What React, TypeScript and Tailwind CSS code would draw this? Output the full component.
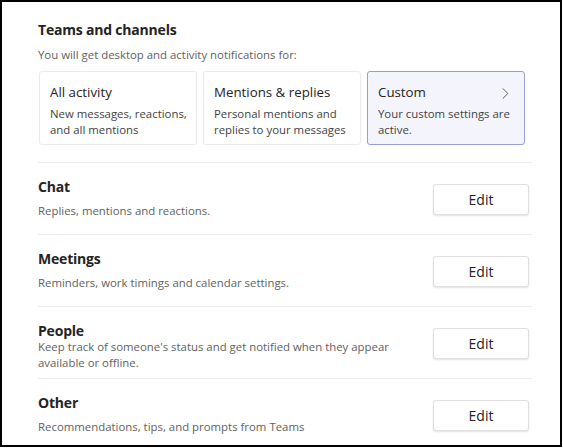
import { ChevronRight } from 'lucide-react';

const options = [
  { title: 'All activity', desc: 'New messages, reactions, and all mentions', active: false },
  { title: 'Mentions & replies', desc: 'Personal mentions and replies to your messages', active: false },
  { title: 'Custom', desc: 'Your custom settings are active.', active: true },
];

const sections = [
  { title: 'Chat', desc: 'Replies, mentions and reactions.' },
  { title: 'Meetings', desc: 'Reminders, work timings and calendar settings.' },
  { title: 'People', desc: "Keep track of someone's status and get notified when they appear available or offline." },
  { title: 'Other', desc: 'Recommendations, tips, and prompts from Teams' },
];

export default function App() {
  return (
    <div
      className="w-[563px] h-[448px] bg-white"
      style={{ fontFamily: '"Segoe UI", "Open Sans", sans-serif' }}
    >
      <div className="w-[562px] h-[447px] border-2 border-black bg-white pl-[36px] pr-[28px] pt-[19px] overflow-hidden">
        <h2 className="text-[14px] leading-[18px] font-bold tracking-[-0.2px] text-[#242424]">Teams and channels</h2>
        <p className="mt-[8px] text-[11.4px] leading-[16px] text-[#616161]">
          You will get desktop and activity notifications for:
        </p>

        <div className="mt-[8px] ml-[1px] flex gap-[6px]">
          {options.map((o) => (
            <div
              key={o.title}
              className={
                o.active
                  ? 'w-[158px] h-[74px] rounded-[3px] border border-[#9a9cd6] bg-[#f4f4fc] pl-[10px] pr-[3px] pt-[10px]'
                  : 'w-[158px] h-[74px] rounded-[3px] border border-[#ebebeb] bg-white pl-[10px] pr-[3px] pt-[10px]'
              }
            >
              <div className="flex h-[20px] items-center justify-between">
                <span className="text-[13.3px] leading-[20px] text-[#242424]">{o.title}</span>
                {o.active && <ChevronRight size={19} strokeWidth={1.1} className="text-[#424242] mr-[6px] relative top-[1px]" />}
              </div>
              <p className="mt-[4px] text-[11.4px] leading-[16px] text-[#424242]">{o.desc}</p>
            </div>
          ))}
        </div>

        <div className="mt-[17px]">
          {sections.map((s) => (
            <div key={s.title} className="border-t border-[#ebebeb] pt-[16px] pb-[7px] flex items-start justify-between">
              <div className="w-[370px]">
                <div className="text-[14px] leading-[16px] font-bold tracking-[-0.2px] text-[#242424]">{s.title}</div>
                <div className="h-[32px] flex items-center">
                  <p className="text-[11.4px] leading-[16px] text-[#616161]">{s.desc}</p>
                </div>
              </div>
              <button className="mt-[5px] mr-[3px] w-[96px] h-[31px] rounded-[3px] border border-[#e0e0e0] bg-white shadow-[0_1px_2px_rgba(0,0,0,0.12)] text-[14px] font-medium text-[#242424]">
                Edit
              </button>
            </div>
          ))}
        </div>
      </div>
    </div>
  );
}
